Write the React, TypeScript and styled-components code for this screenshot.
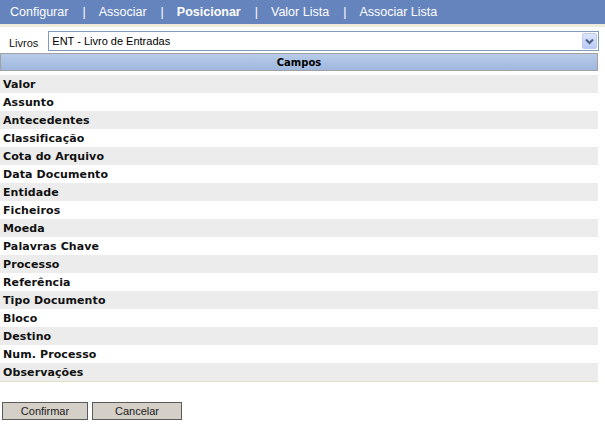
import React, { FC } from "react"
import styled, { createGlobalStyle } from "styled-components"

const GlobalStyle = createGlobalStyle`
  html, body {
    margin: 0;
    padding: 0;
    background: #ffffff;
  }
  body {
    font-family: "Liberation Sans", Arial, sans-serif;
  }
`

const Page = styled.div({
  width: '605px',
  height: '426px',
  display: 'flex',
  flexDirection: 'column',
})

const NavBar = styled.div({
  height: '24px',
  background: '#6584bd',
  borderBottom: '3px solid #eeebdc',
  display: 'flex',
  alignItems: 'center',
  paddingLeft: '10px',
  color: '#ffffff',
  fontSize: '12.5px',
  fontFamily: '"Liberation Sans", Tahoma, sans-serif',
})

const NavItem = styled.span<{ $active?: boolean }>(({ $active }) => ({
  fontWeight: $active ? 'bold' : 'normal',
  whiteSpace: 'nowrap',
}))

const NavSep = styled.span({
  padding: '0 13px 0 14px',
})

const FilterRow = styled.div({
  display: 'flex',
  alignItems: 'flex-start',
  height: '22px',
  padding: '4px 6px 0 9px',
  gap: '10px',
  fontSize: '11px',
})

const Label = styled.label({
  color: '#111',
  paddingTop: '6px',
})

const SelectBox = styled.div({
  flex: 1,
  height: '18px',
  border: '1px solid #7f9db9',
  background: '#fff',
  display: 'flex',
  alignItems: 'center',
  justifyContent: 'space-between',
  paddingLeft: '3px',
  color: '#000',
})

const DropButton = styled.div({
  width: '15px',
  height: '16px',
  marginRight: '1px',
  borderRadius: '2px',
  background: 'linear-gradient(#dce6fb, #b9cbf5)',
  border: '1px solid #bccbf0',
  boxSizing: 'border-box',
  display: 'flex',
  alignItems: 'center',
  justifyContent: 'center',
})

const Table = styled.div({
  width: '598px',
  borderBottom: '1px solid #e3e1c9',
})

const HeaderCell = styled.div({
  height: '16px',
  background: 'linear-gradient(#b8cbe9, #9fb8df)',
  border: '1px solid #a0a0a0',
  display: 'flex',
  alignItems: 'center',
  justifyContent: 'center',
  fontFamily: '"DejaVu Sans", Verdana, sans-serif',
  fontWeight: 'bold',
  fontSize: '10px',
  color: '#000',
  marginBottom: '4px',
})

const Row = styled.div<{ $odd: boolean }>(({ $odd }) => ({
  height: '18px',
  display: 'flex',
  alignItems: 'center',
  paddingLeft: '3px',
  background: $odd ? '#ececec' : '#ffffff',
  fontFamily: '"DejaVu Sans", Verdana, sans-serif',
  fontWeight: 'bold',
  fontSize: '11px',
  letterSpacing: '0.1px',
  color: '#111',
}))

const Buttons = styled.div({
  display: 'flex',
  gap: '4px',
  padding: '20px 0 0 2px',
})

const Button = styled.button<{ $width: number }>(({ $width }) => ({
  width: `${$width}px`,
  height: '18px',
  background: '#d4d0c8',
  border: '1px solid #5a5a5a',
  fontFamily: '"Liberation Sans", Tahoma, sans-serif',
  fontSize: '11px',
  color: '#222',
  padding: 0,
}))

const navItems = ['Configurar', 'Associar', 'Posicionar', 'Valor Lista', 'Associar Lista']

const campos = [
  'Valor',
  'Assunto',
  'Antecedentes',
  'Classificação',
  'Cota do Arquivo',
  'Data Documento',
  'Entidade',
  'Ficheiros',
  'Moeda',
  'Palavras Chave',
  'Processo',
  'Referência',
  'Tipo Documento',
  'Bloco',
  'Destino',
  'Num. Processo',
  'Observações',
]

const App: FC = () => {
  return (
    <Page>
      <GlobalStyle />
      <NavBar>
        {navItems.map((item, i) => (
          <React.Fragment key={item}>
            {i > 0 ? <NavSep>|</NavSep> : null}
            <NavItem $active={item === 'Posicionar'}>{item}</NavItem>
          </React.Fragment>
        ))}
      </NavBar>
      <FilterRow>
        <Label>Livros</Label>
        <SelectBox>
          <span>ENT - Livro de Entradas</span>
          <DropButton>
            <svg width="9" height="7" viewBox="0 0 9 7">
              <path d="M1 1.5 L4.5 5 L8 1.5" fill="none" stroke="#4d6185" strokeWidth="2" />
            </svg>
          </DropButton>
        </SelectBox>
      </FilterRow>
      <Table>
        <HeaderCell>Campos</HeaderCell>
        {campos.map((c, i) => (
          <Row key={c} $odd={i % 2 === 0}>{c}</Row>
        ))}
      </Table>
      <Buttons>
        <Button $width={86}>Confirmar</Button>
        <Button $width={90}>Cancelar</Button>
      </Buttons>
    </Page>
  )
}

export default App
